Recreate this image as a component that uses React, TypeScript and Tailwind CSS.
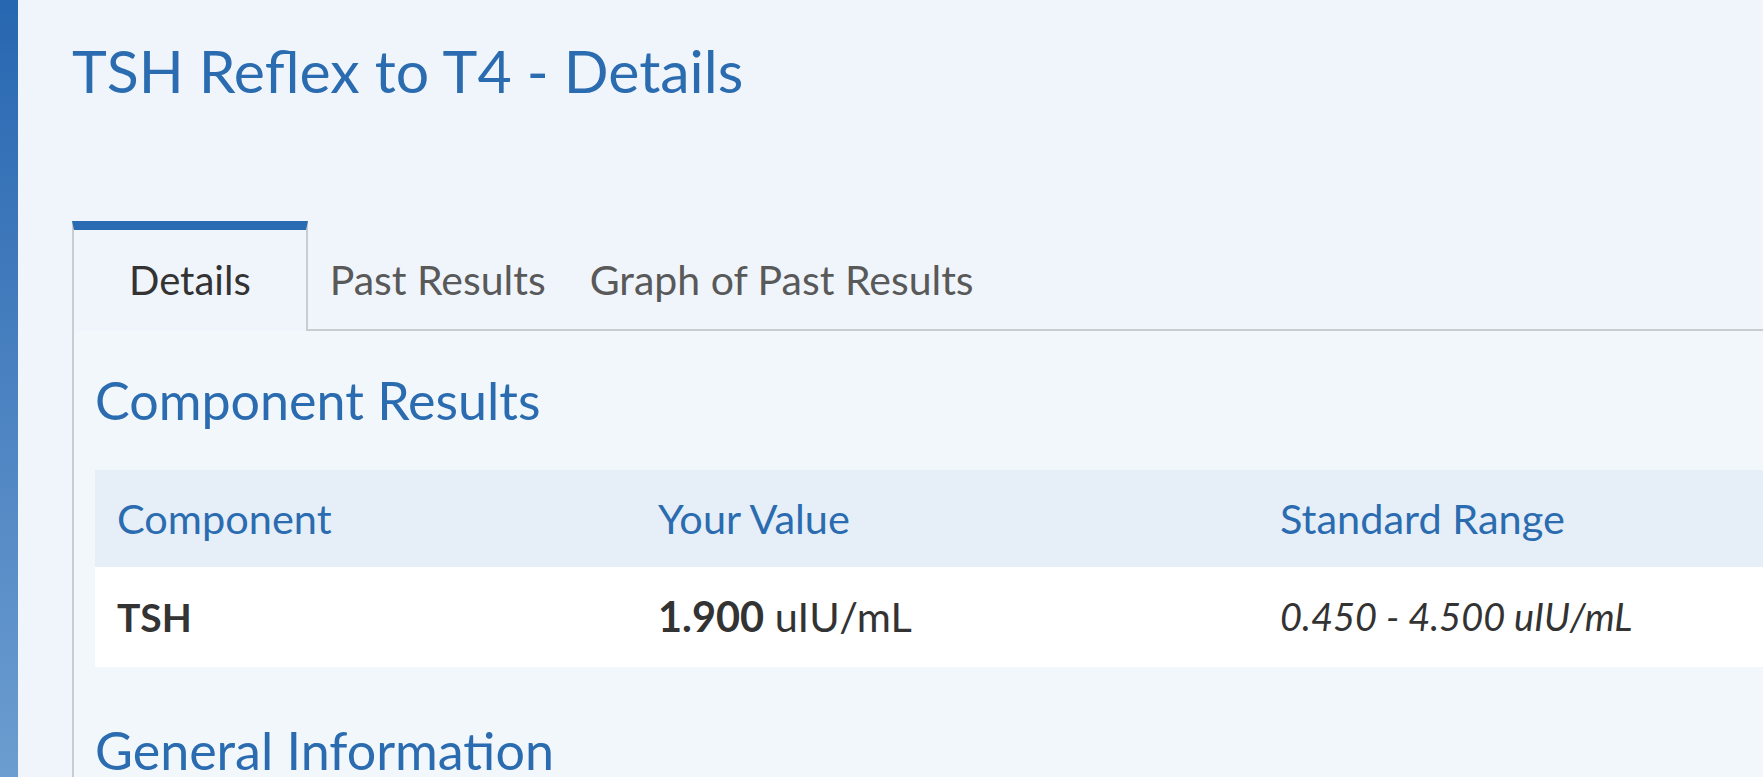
const App = () => {
  const tabs = ["Details", "Past Results", "Graph of Past Results"];

  return (
    <div className="flex h-screen overflow-hidden bg-[#f0f5fc] font-[Lato,sans-serif]">
      <div className="w-[18px] shrink-0 bg-gradient-to-b from-[#2767b1] to-[#6c9dd0]" />

      <main className="flex min-w-0 flex-1 flex-col pl-[54px]">
        <h1 className="mt-[36px] text-[59px] leading-[1.2] text-[#2b6cb0]">
          TSH Reflex to T4 - Details
        </h1>

        <div className="mt-[114px] flex items-end">
          {tabs.map((tab, i) =>
            i === 0 ? (
              <div
                key={tab}
                className="flex h-[110px] items-center border-x-2 border-t-[9px] border-x-[#c9cdd2] border-t-[#2a6cb3] px-[55px] text-[40px] leading-[1.2] text-[#333]"
              >
                {tab}
              </div>
            ) : (
              <div
                key={tab}
                className="flex h-[101px] items-center border-b-2 border-[#c9cdd2] px-[22px] text-[41px] leading-[1.2] text-[#595959]"
              >
                {tab}
              </div>
            )
          )}
          <div className="h-[101px] flex-1 border-b-2 border-[#c9cdd2]" />
        </div>

        <section className="flex-1 border-l-2 border-[#c9cdd2] bg-[#f2f7fc] pl-[21px]">
          <h2 className="mt-[38px] text-[52px] leading-[1.2] text-[#2b6cb0]">
            Component Results
          </h2>

          <div className="mt-[39px]">
            <div className="grid h-[97px] grid-cols-[541px_622px_1fr] items-center bg-[#e6eff8] text-[41.5px] leading-[1.2] text-[#2b6cb0]">
              <div className="px-[22px]">Component</div>
              <div className="px-[22px]">Your Value</div>
              <div className="px-[22px]">Standard Range</div>
            </div>
            <div className="grid h-[100px] grid-cols-[541px_622px_1fr] items-center bg-white text-[41.5px] leading-[1.2] text-[#333]">
              <div className="px-[22px] text-[39px] font-bold">TSH</div>
              <div className="px-[22px]">
                <span className="font-bold">1.900</span> uIU/mL
              </div>
              <div className="px-[22px] text-[38px] italic">0.450 - 4.500 uIU/mL</div>
            </div>
          </div>

          <h2 className="mt-[52px] text-[52px] leading-[1.2] text-[#2b6cb0]">
            General Information
          </h2>
        </section>
      </main>
    </div>
  );
};

export default App;
